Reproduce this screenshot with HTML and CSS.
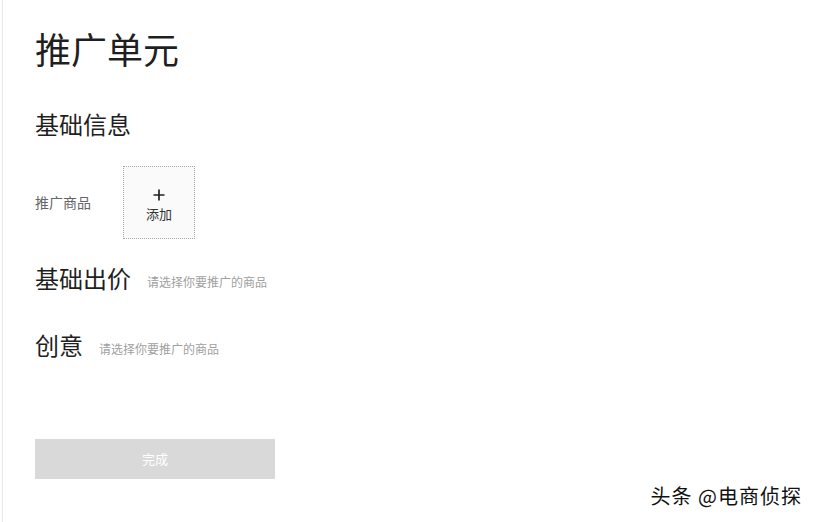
FILE: index.html
```html
<!DOCTYPE html>
<html lang="zh">
<head>
<meta charset="utf-8">
<title>推广单元</title>
<link rel="stylesheet" href="styles.css">
</head>
<body>
<div class="page">
  <div class="content">
    <h1 class="title">推广单元</h1>
    <h2 class="section first">基础信息</h2>
    <div class="field">
      <span class="label">推广商品</span>
      <div class="upload">
        <svg class="plus" width="12" height="12" viewBox="0 0 12 12" aria-hidden="true">
          <path d="M6 0.5V11.5M0.5 6H11.5" stroke="#222" stroke-width="1.7" fill="none"/>
        </svg>
        <span class="upload-text">添加</span>
      </div>
    </div>
    <h2 class="section bid">基础出价<span class="hint">请选择你要推广的商品</span></h2>
    <h2 class="section idea">创意<span class="hint">请选择你要推广的商品</span></h2>
    <button class="done" type="button">完成</button>
  </div>
  <div class="watermark">头条 @电商侦探</div>
</div>
</body>
</html>
```

FILE: styles.css
```css
html, body {
  margin: 0;
  padding: 0;
  background: #fff;
}
body {
  font-family: "Noto Sans CJK SC", "Noto Sans", sans-serif;
  color: #222;
}
.page {
  position: relative;
  width: 815px;
  height: 522px;
  box-sizing: border-box;
  margin-left: 2px;
  border-left: 1px solid #e8e8e8;
  overflow: hidden;
}
.content {
  padding-left: 32px;
  padding-top: 30px;
}
.title {
  margin: 0;
  font-size: 36px;
  line-height: 36px;
  font-weight: 400;
  color: #1f1f1f;
}
.section {
  margin: 0;
  font-size: 24px;
  line-height: 24px;
  font-weight: 400;
  color: #1f1f1f;
  display: flex;
  align-items: flex-end;
}
.section.first { margin-top: 46px; }
.section.bid { margin-top: 27px; }
.section.idea { margin-top: 43px; }
.hint {
  font-size: 12px;
  line-height: 16px;
  color: #a0a0a0;
  margin-left: 16px;
  margin-bottom: 0;
}
.field {
  display: flex;
  align-items: center;
  margin-top: 30px;
}
.label {
  font-size: 14px;
  color: #666;
  width: 88px;
  margin-top: -2px;
}
.upload {
  width: 72px;
  height: 73px;
  box-sizing: border-box;
  border: 1px dotted #a8a8a8;
  background: #fafafa;
  display: flex;
  flex-direction: column;
  align-items: center;
  justify-content: center;
  padding-top: 10px;
}
.plus {
  display: block;
  margin-top: -4px;
}
.upload-text {
  font-size: 13px;
  line-height: 16px;
  color: #333;
  margin-top: 5px;
}
.done {
  display: block;
  margin-top: 82px;
  width: 240px;
  height: 40px;
  border: none;
  background: #d9d9d9;
  color: #fff;
  font-family: inherit;
  font-size: 13px;
  line-height: 16px;
  padding: 0 0 1px;
}
.watermark {
  position: absolute;
  right: 15px;
  bottom: 14px;
  font-size: 20px;
  line-height: 24px;
  letter-spacing: 1px;
  color: #111;
  text-shadow: 0 0 2px #fff, 1px 1px 0 #fff, -1px -1px 0 #fff;
}
```
